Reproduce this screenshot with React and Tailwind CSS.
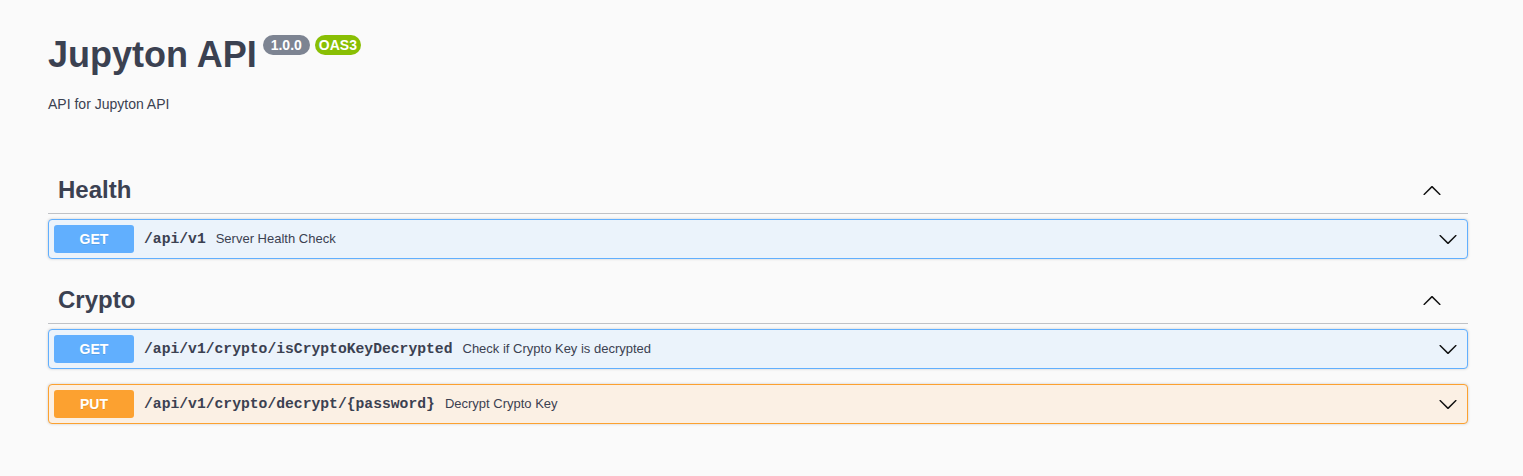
import { useState } from "react"

const ChevronDown = ({ className }) => (
  <svg viewBox="0 0 20 20" width="20" height="20" className={className} fill="currentColor">
    <path d="M17.418 6.109c.272-.268.709-.268.979 0s.271.701 0 .969l-7.908 7.83c-.27.268-.707.268-.979 0l-7.908-7.83c-.27-.268-.27-.701 0-.969.271-.268.709-.268.979 0L10 13.25l7.418-7.141z" />
  </svg>
)

const ChevronUp = ({ className }) => (
  <svg viewBox="0 0 20 20" width="20" height="20" className={className} fill="currentColor">
    <path d="M17.418 14.908c.272.268.709.268.979 0s.271-.701 0-.969l-7.908-7.83c-.27-.268-.707-.268-.979 0l-7.908 7.83c-.27.268-.27.701 0 .969.271.268.709.268.979 0L10 7.767l7.418 7.141z" />
  </svg>
)

const styles = {
  GET: {
    block: "border-[#61affe] bg-[#ebf3fb]",
    badge: "bg-[#61affe]",
  },
  PUT: {
    block: "border-[#fca130] bg-[#fbf0e4]",
    badge: "bg-[#fca130]",
  },
}

const tags = [
  {
    name: "Health",
    ops: [{ method: "GET", path: "/api/v1", summary: "Server Health Check" }],
  },
  {
    name: "Crypto",
    ops: [
      { method: "GET", path: "/api/v1/crypto/isCryptoKeyDecrypted", summary: "Check if Crypto Key is decrypted" },
      { method: "PUT", path: "/api/v1/crypto/decrypt/{password}", summary: "Decrypt Crypto Key" },
    ],
  },
]

function Operation({ op }) {
  const s = styles[op.method]
  return (
    <div className={`mb-[15px] rounded-[4px] border shadow-[0_0_3px_rgba(0,0,0,0.19)] ${s.block}`}>
      <div className="flex items-center p-[5px] cursor-pointer">
        <span
          className={`w-[80px] shrink-0 rounded-[3px] py-[6px] text-center text-[14px] leading-[16px] font-bold text-white [text-shadow:0_1px_0_rgba(0,0,0,0.1)] ${s.badge}`}
        >
          {op.method}
        </span>
        <span className="px-[10px] font-['Liberation_Mono',monospace] text-[14.7px] font-bold text-[#3b4151]">
          {op.path}
        </span>
        <span className="flex-1 text-[13px] text-[#3b4151]">{op.summary}</span>
        <ChevronDown className="mr-[4px] text-[#111]" />
      </div>
    </div>
  )
}

export default function App() {
  const [open] = useState(true)

  return (
    <div className="min-h-screen bg-[#fafafa] font-['Liberation_Sans',Arial,sans-serif] text-[#3b4151]">
      <div className="pl-[48px] pr-[55px] pb-[30px]">
        {/* Info */}
        <div className="pt-[34px]">
          <div className="flex items-start">
            <h1 className="text-[36px] leading-[41px] font-bold text-[#3b4151]">Jupyton API</h1>
            <span className="ml-[6px] mt-[1px] rounded-[57px] bg-[#7d8492] px-[8px] text-[14px] leading-[20px] font-bold text-white">
              1.0.0
            </span>
            <span className="ml-[5px] mt-[1px] rounded-[57px] bg-[#89bf04] px-[4px] text-[14px] leading-[20px] font-bold text-white">
              OAS3
            </span>
          </div>
          <p className="mt-[21px] text-[14px] leading-[16px]">API for Jupyton API</p>
        </div>

        {/* Tags */}
        <div className="mt-[54px]">
          {tags.map((tag) => (
            <div key={tag.name} className="mb-[17px]">
              <div className="mb-[5px] flex items-center border-b border-[rgba(59,65,81,0.3)] py-[10px] pl-[10px] pr-[26px] cursor-pointer">
                <h3 className="flex-1 text-[24px] leading-[27px] font-bold text-[#3b4151]">{tag.name}</h3>
                {open ? <ChevronUp className="text-[#111]" /> : <ChevronDown className="text-[#111]" />}
              </div>
              {tag.ops.map((op) => (
                <Operation key={op.path} op={op} />
              ))}
            </div>
          ))}
        </div>
      </div>
    </div>
  )
}
